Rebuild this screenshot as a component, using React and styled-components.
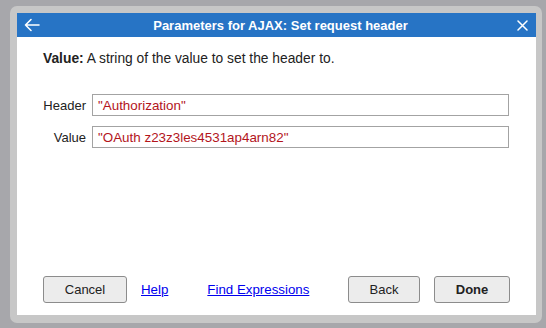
import React from "react";
import styled, { createGlobalStyle } from "styled-components";

const Global = createGlobalStyle`
  html, body { margin: 0; padding: 0; background: #a7a7ab; }
  body { font-family: "Liberation Sans", Arial, sans-serif; }
`;

const Page = styled.div`
  width: 546px;
  height: 328px;
  box-sizing: border-box;
  padding: 6px 4px 5px 10px;
`;

const Frame = styled.div`
  height: 100%;
  box-sizing: border-box;
  background: #c7c7c7;
  border-radius: 7px;
  padding: 7px 6px 8px 7px;
`;

const Dialog = styled.div`
  height: 100%;
  background: #ffffff;
  display: flex;
  flex-direction: column;
`;

const TitleBar = styled.div`
  height: 24px;
  background: #2774c5;
  display: flex;
  align-items: center;
  padding: 0 8px 0 7px;
  color: #fff;
`;

const Title = styled.div`
  flex: 1;
  text-align: center;
  font-size: 13px;
  font-weight: bold;
  padding-left: 4px;
`;

const IconButton = styled.span`
  display: flex;
  width: ${(p) => p.$w}px;
  height: 24px;
  align-items: center;
  justify-content: center;
`;

const Body = styled.div`
  flex: 1;
  display: flex;
  flex-direction: column;
  padding: 14px 27px 12px 26px;
`;

const Description = styled.div`
  font-size: 13.8px;
  line-height: 16px;
  color: #222;
  b { font-weight: bold; }
`;

const Form = styled.div`
  margin-top: 27px;
  display: grid;
  grid-template-columns: 43px 1fr;
  column-gap: 6px;
  row-gap: 10px;
  align-items: center;
`;

const Label = styled.label`
  font-size: 13px;
  color: #222;
  text-align: right;
`;

const Field = styled.div`
  height: 22px;
  box-sizing: border-box;
  border: 1px solid #a3a3a3;
  padding: 0 5px;
  display: flex;
  align-items: center;
  font-size: 13.4px;
  color: #b3151c;
`;

const Footer = styled.div`
  margin-top: auto;
  display: flex;
  align-items: center;
  margin-right: -1px;
`;

const Button = styled.button`
  width: ${(p) => p.$w}px;
  height: 27px;
  box-sizing: border-box;
  background: #ececec;
  border: 1px solid #8c8c8c;
  border-radius: 3px;
  font-family: "Liberation Sans", Arial, sans-serif;
  font-size: 13px;
  font-weight: ${(p) => (p.$primary ? "bold" : "normal")};
  color: #222;
  padding: 0;
  margin-left: ${(p) => p.$ml || 0}px;
`;

const Link = styled.a`
  font-size: 13.3px;
  color: #0000ee;
  text-decoration: underline;
  margin-left: ${(p) => p.$ml}px;
`;

const Spacer = styled.div`
  flex: 1;
`;

export default function App() {
  return (
    <>
      <Global />
      <Page>
        <Frame>
          <Dialog>
            <TitleBar>
              <IconButton $w={16}>
                <svg width="16" height="14" viewBox="0 0 16 14" fill="none" stroke="#fff" strokeWidth="1.6" strokeLinecap="round" strokeLinejoin="round">
                  <path d="M15 7H1.5M7 1.5L1.5 7L7 12.5" />
                </svg>
              </IconButton>
              <Title>Parameters for AJAX: Set request header</Title>
              <IconButton $w={11}>
                <svg width="11" height="11" viewBox="0 0 11 11" fill="none" stroke="#fff" strokeWidth="1.5" strokeLinecap="round">
                  <path d="M1 1L10 10M10 1L1 10" />
                </svg>
              </IconButton>
            </TitleBar>
            <Body>
              <Description>
                <b>Value:</b> A string of the value to set the header to.
              </Description>
              <Form>
                <Label>Header</Label>
                <Field>"Authorization"</Field>
                <Label>Value</Label>
                <Field>"OAuth z23z3les4531ap4arn82"</Field>
              </Form>
              <Footer>
                <Button $w={84}>Cancel</Button>
                <Link href="#" $ml={14}>Help</Link>
                <Link href="#" $ml={39}>Find Expressions</Link>
                <Spacer />
                <Button $w={72}>Back</Button>
                <Button $w={76} $ml={14} $primary>Done</Button>
              </Footer>
            </Body>
          </Dialog>
        </Frame>
      </Page>
    </>
  );
}
